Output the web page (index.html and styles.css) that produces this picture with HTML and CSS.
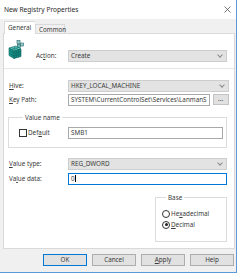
FILE: index.html
```html
<!DOCTYPE html>
<html lang="en">
<head>
    <meta charset="UTF-8">
    <title>New Registry Properties</title>
    <link rel="stylesheet" href="styles.css">
</head>
<body>

    <div class="window">
        <div class="titlebar">
            <span class="title">New Registry Properties</span>
            <svg class="close" width="7" height="7" viewBox="0 0 7 7"><path d="M0.5 0.5 L6.5 6.5 M6.5 0.5 L0.5 6.5" stroke="#555" stroke-width="0.8"/></svg>
        </div>

        <div class="tabs">
            <div class="tab active">General</div>
            <div class="tab">Common</div>
        </div>

        <div class="panel">
            <div class="header">
                <svg class="reg-icon" width="16" height="19" viewBox="0 0 16 19">
                    <!-- small cubes -->
                    <rect x="9" y="0.5" width="3" height="3" fill="#8fd3cf" stroke="#2d5f66" stroke-width="0.6"/>
                    <rect x="12.5" y="3" width="3" height="3" fill="#8fd3cf" stroke="#2d5f66" stroke-width="0.6"/>
                    <rect x="9.5" y="4.5" width="3" height="3" fill="#5bb8b2" stroke="#2d5f66" stroke-width="0.6"/>
                    <!-- main block -->
                    <polygon points="1,8 8,6 13,9 6,11" fill="#5fd0c6" stroke="#0d5e5a" stroke-width="0.6"/>
                    <polygon points="1,8 6,11 6,18.5 1,15.5" fill="#1aa89c" stroke="#0d5e5a" stroke-width="0.6"/>
                    <polygon points="6,11 13,9 13,16.5 6,18.5" fill="#128a80" stroke="#0d5e5a" stroke-width="0.6"/>
                    <path d="M2.7 9 L3.2 16.5 M4.4 10 L4.4 17.5 M1 10.5 L6 13.5 M1 13 L6 16 M8.3 10.4 L8.3 17.9 M10.6 9.7 L10.6 17.2 M6 13.5 L13 11.5 M6 16 L13 14 M3.3 7.4 L8.3 10.4 M5.6 6.7 L10.6 9.7 M3.5 9.5 L10.5 7.5" stroke="#0d5e5a" stroke-width="0.5" fill="none"/>
                </svg>
                <label class="header-label">Ac<u>t</u>ion:</label>
                <div class="combo header-combo">Create<span class="chev"></span></div>
            </div>

            <div class="separator"></div>

            <div class="form">
                <label><u>H</u>ive:</label>
                <div class="combo">HKEY_LOCAL_MACHINE<span class="chev"></span></div>

                <label><u>K</u>ey Path:</label>
                <div class="path-row">
                    <div class="input">SYSTEM\CurrentControlSet\Services\LanmanS</div>
                    <div class="dots">...</div>
                </div>
            </div>

            <fieldset class="group value-name">
                <legend>Value name</legend>
                <div class="name-row">
                    <div class="check-wrap"><span class="checkbox"></span>Def<u>a</u>ult</div>
                    <div class="input">SMB1</div>
                </div>
            </fieldset>

            <div class="form value-form">
                <label><u>V</u>alue type:</label>
                <div class="combo">REG_DWORD<span class="chev"></span></div>

                <label>Va<u>l</u>ue data:</label>
                <div class="input focused">0<span class="caret"></span></div>
            </div>

            <fieldset class="group base">
                <legend>Base</legend>
                <div class="radio-row"><span class="radio"></span>He<u>x</u>adecimal</div>
                <div class="radio-row"><span class="radio checked"></span><u>D</u>ecimal</div>
            </fieldset>
        </div>

        <div class="buttons">
            <button class="default">OK</button>
            <button>Cancel</button>
            <button><u>A</u>pply</button>
            <button>Help</button>
        </div>
    </div>

</body>
</html>
```

FILE: styles.css
```css
body {
    margin: 0;
    background-color: #ffffff;
    font-family: 'Noto Sans', 'Open Sans', sans-serif;
    font-size: 6.3px;
    color: #3a3a3a;
}

u {
    text-decoration-thickness: 0.5px;
    text-underline-offset: 1px;
}

.window {
    width: 236px;
    height: 272px;
    background-color: #f0f0f0;
    border-right: 1px solid #5a9ad8;
    border-bottom: 1px solid #5a9ad8;
    display: flex;
    flex-direction: column;
}

.titlebar {
    height: 19px;
    flex: none;
    background-color: #ffffff;
    display: flex;
    align-items: center;
    justify-content: space-between;
    padding: 0 5px 0 4px;
}

.title {
    font-size: 6.6px;
    color: #2a2a2a;
}

.tabs {
    height: 14px;
    flex: none;
    display: flex;
    align-items: flex-end;
    padding-left: 4px;
}

.tab {
    height: 9px;
    line-height: 9px;
    padding: 0 3px;
    border: 1px solid #d9d9d9;
    border-bottom: none;
    background-color: #f0f0f0;
    box-sizing: border-box;
}

.tab.active {
    height: 13px;
    line-height: 11px;
    width: 31px;
    padding: 0 3px;
    background-color: #ffffff;
    border-right: none;
    margin-bottom: -1px;
    position: relative;
    z-index: 1;
}

.tab.active + .tab {
    width: 30px;
    padding-left: 3px;
}

.panel {
    flex: none;
    width: 232px;
    height: 216px;
    margin-left: 3px;
    box-sizing: border-box;
    background-color: #ffffff;
    border: 1px solid #d9d9d9;
    padding: 6px 7px 0 4px;
}

.header {
    display: flex;
    height: 22px;
}

.reg-icon {
    flex: none;
    margin-right: 12px;
}

.header-label {
    width: 32px;
    align-self: flex-end;
    line-height: 12px;
}

.header-combo {
    flex: 1;
    align-self: flex-end;
}

.separator {
    height: 1px;
    background-color: #e6e6e6;
    margin: 6px -7px 0 -4px;
}

.form {
    display: grid;
    grid-template-columns: 60px 1fr;
    row-gap: 2px;
    margin-top: 11px;
    line-height: 12px;
}

.form label {
    padding-left: 1px;
}

.value-form {
    margin-top: 10px;
    row-gap: 3px;
}

.combo,
.input,
.dots {
    height: 12px;
    box-sizing: border-box;
    line-height: 10px;
    padding: 0 2px;
    white-space: nowrap;
    overflow: hidden;
}

.combo {
    position: relative;
    background-color: #e3e3e3;
    border: 1px solid #cdcdcd;
}

.chev {
    position: absolute;
    right: 4px;
    top: 2px;
    width: 3px;
    height: 3px;
    border-right: 1px solid #8a8a8a;
    border-bottom: 1px solid #8a8a8a;
    transform: rotate(45deg);
}

.input {
    background-color: #ffffff;
    border: 1px solid #a9a9a9;
}

.input.focused {
    border-color: #0078d7;
}

.caret {
    display: inline-block;
    width: 0.6px;
    height: 7px;
    background-color: #000;
    vertical-align: -1px;
}

.path-row {
    display: flex;
    gap: 3px;
}

.path-row .input {
    flex: 1;
}

.dots {
    width: 16px;
    flex: none;
    height: 11px;
    background-color: #e1e1e1;
    border: 1px solid #c4c4c4;
    text-align: center;
    line-height: 8px;
    padding: 0;
}

.group {
    margin: 0;
    border: 1px solid #dcdcdc;
    min-width: 0;
}

.group legend {
    line-height: 9px;
    padding: 0 2px;
    margin-left: 4px;
}

.value-name {
    margin-top: 7px;
    padding: 5px 3px 8px 10px;
}

.name-row {
    display: grid;
    grid-template-columns: 49px 1fr;
    line-height: 12px;
}

.check-wrap {
    display: flex;
    align-items: center;
}

.checkbox {
    width: 8px;
    height: 8px;
    box-sizing: border-box;
    border: 1px solid #333;
    margin-right: 1px;
    background-color: #fff;
}

.base {
    width: 72px;
    box-sizing: border-box;
    margin: 8px 0 0 147px;
    padding: 6px 4px 11px 6px;
}

.radio-row {
    display: flex;
    align-items: center;
    height: 11px;
}

.radio {
    width: 8px;
    height: 8px;
    box-sizing: border-box;
    border: 1px solid #333;
    border-radius: 50%;
    margin-right: 1px;
    position: relative;
}

.radio.checked::after {
    content: "";
    position: absolute;
    left: 1.5px;
    top: 1.5px;
    width: 3px;
    height: 3px;
    border-radius: 50%;
    background-color: #222;
}

.buttons {
    display: flex;
    justify-content: flex-end;
    gap: 5px;
    margin-top: 5px;
    padding-right: 2px;
}

button {
    width: 44px;
    height: 12px;
    padding: 0;
    font-family: inherit;
    font-size: 6.3px;
    line-height: 10px;
    color: #3a3a3a;
    background-color: #e1e1e1;
    border: 1px solid #adadad;
}

button.default {
    border-color: #0078d7;
}
```
